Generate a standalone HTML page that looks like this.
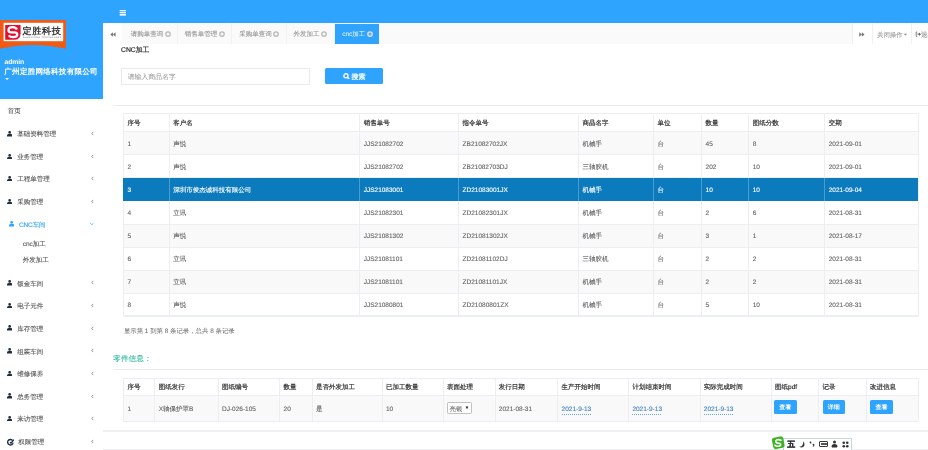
<!DOCTYPE html>
<html><head><meta charset="utf-8"><style>
*{box-sizing:border-box;margin:0;padding:0}
html,body{width:928px;height:450px;overflow:hidden;background:#fff}
body{position:relative;text-rendering:geometricPrecision;font-family:"Liberation Sans",sans-serif;color:#676a6c;font-size:6.5px;line-height:1}
.a{position:absolute;white-space:nowrap}
</style></head><body>
<div style="position:absolute;left:0;top:0;width:928px;height:450px;will-change:transform">
<div class="a" style="left:0;top:0;width:928px;height:23px;background:#2fa4ff"></div>
<svg class="a" style="left:119px;top:9px" width="8" height="8" viewBox="0 0 8 8"><rect x="0.7" y="1" width="6.2" height="1.3" fill="#fff"/><rect x="0.7" y="3" width="6.2" height="1.3" fill="#fff"/><rect x="0.7" y="5" width="6.2" height="1.6" fill="#fff"/></svg>
<div class="a" style="left:0;top:0;width:103.3px;height:99px;background:#2fa4ff"></div>
<svg class="a" style="left:0;top:20px" width="67" height="29" viewBox="0 0 67 29">
  <path d="M0 0 H66 V28.8 Q33 21 0 28.8 Z" fill="#f05a14"/>
  <rect x="3.6" y="2.8" width="59.6" height="18.4" fill="#fff"/>
  <path d="M5.2 4.9 H20 Q20.6 4.9 20.6 5.5 V13.2 Q20.6 19.8 14 19.8 H5.2 Z" fill="#e2102e"/>
  <path d="M17 9.6 Q15.8 7.1 12.6 7.1 Q8.6 7.1 8.5 10.2 Q8.5 12.3 11.2 12.3 H14.4 Q17.3 12.4 17.3 14.7 Q17.1 17.2 12.8 17.2 Q10.1 17.2 8.7 15.4" fill="none" stroke="#fff" stroke-width="2.3"/>
</svg>
<div class="a" style="left:22.4px;top:27.2px;font-size:9.2px;font-weight:bold;color:#333;letter-spacing:0.6px">定胜科技</div>
<div class="a" style="left:23px;top:36.9px;font-size:2.1px;color:#555;letter-spacing:0.55px">DINGSHENG TECHNOLOGY</div>
<div class="a" style="left:4.50px;top:60.10px;color:#fff;font-size:6.8px;font-weight:bold;letter-spacing:-0.1px">admin</div>
<div class="a" style="left:4.30px;top:67.80px;color:#fff;font-weight:bold;font-size:7.6px;letter-spacing:0.2px">广州定胜网络科技有限公司</div>
<div class="a" style="left:5px;top:78px;width:0;height:0;border-left:2px solid transparent;border-right:2px solid transparent;border-top:2px solid #fff"></div>
<div class="a" style="left:7.80px;top:109.10px;color:#555;-webkit-text-stroke:0.12px #555">首页</div>
<svg class="a" style="left:7.1px;top:131.00px" width="5.3" height="5.5" viewBox="0 0 10.6 11"><rect x="2.7" y="0" width="5.2" height="5.6" rx="2.3" fill="#1f2d3f"/><path d="M0 11 V8.8 Q0 5.8 3 5.8 H7.6 Q10.6 5.8 10.6 8.8 V11 Z" fill="#1f2d3f"/></svg>
<div class="a" style="left:17.30px;top:132.40px;color:#585858;-webkit-text-stroke:0.12px #585858">基础资料管理</div>
<svg class="a" style="left:89.2px;top:130.30px" width="6" height="7" viewBox="0 0 6 7"><path d="M4.2 1.9 L2.8 3.5 L4.2 5.1" fill="none" stroke="#777" stroke-width="0.8"/></svg>
<svg class="a" style="left:7.1px;top:153.50px" width="5.3" height="5.5" viewBox="0 0 10.6 11"><rect x="2.7" y="0" width="5.2" height="5.6" rx="2.3" fill="#1f2d3f"/><path d="M0 11 V8.8 Q0 5.8 3 5.8 H7.6 Q10.6 5.8 10.6 8.8 V11 Z" fill="#1f2d3f"/></svg>
<div class="a" style="left:17.30px;top:154.90px;color:#585858;-webkit-text-stroke:0.12px #585858">业务管理</div>
<svg class="a" style="left:89.2px;top:152.80px" width="6" height="7" viewBox="0 0 6 7"><path d="M4.2 1.9 L2.8 3.5 L4.2 5.1" fill="none" stroke="#777" stroke-width="0.8"/></svg>
<svg class="a" style="left:7.1px;top:175.90px" width="5.3" height="5.5" viewBox="0 0 10.6 11"><rect x="2.7" y="0" width="5.2" height="5.6" rx="2.3" fill="#1f2d3f"/><path d="M0 11 V8.8 Q0 5.8 3 5.8 H7.6 Q10.6 5.8 10.6 8.8 V11 Z" fill="#1f2d3f"/></svg>
<div class="a" style="left:17.30px;top:177.30px;color:#585858;-webkit-text-stroke:0.12px #585858">工程单管理</div>
<svg class="a" style="left:89.2px;top:175.20px" width="6" height="7" viewBox="0 0 6 7"><path d="M4.2 1.9 L2.8 3.5 L4.2 5.1" fill="none" stroke="#777" stroke-width="0.8"/></svg>
<svg class="a" style="left:7.1px;top:198.50px" width="5.3" height="5.5" viewBox="0 0 10.6 11"><rect x="2.7" y="0" width="5.2" height="5.6" rx="2.3" fill="#1f2d3f"/><path d="M0 11 V8.8 Q0 5.8 3 5.8 H7.6 Q10.6 5.8 10.6 8.8 V11 Z" fill="#1f2d3f"/></svg>
<div class="a" style="left:17.30px;top:199.90px;color:#585858;-webkit-text-stroke:0.12px #585858">采购管理</div>
<svg class="a" style="left:89.2px;top:197.80px" width="6" height="7" viewBox="0 0 6 7"><path d="M4.2 1.9 L2.8 3.5 L4.2 5.1" fill="none" stroke="#777" stroke-width="0.8"/></svg>
<svg class="a" style="left:9.1px;top:221.30px" width="5.3" height="5.5" viewBox="0 0 10.6 11"><rect x="2.7" y="0" width="5.2" height="5.6" rx="2.3" fill="#2fa4ff"/><path d="M0 11 V8.8 Q0 5.8 3 5.8 H7.6 Q10.6 5.8 10.6 8.8 V11 Z" fill="#2fa4ff"/></svg>
<div class="a" style="left:19.00px;top:222.70px;color:#2fa4ff;-webkit-text-stroke:0.12px #2fa4ff;letter-spacing:-0.15px">CNC车间</div>
<svg class="a" style="left:88.1px;top:221.10px" width="7" height="6" viewBox="0 0 7 6"><path d="M2.3 2.3 L3.8 3.7 L5.3 2.3" fill="none" stroke="#2fa4ff" stroke-width="0.75"/></svg>
<svg class="a" style="left:7.1px;top:280.10px" width="5.3" height="5.5" viewBox="0 0 10.6 11"><rect x="2.7" y="0" width="5.2" height="5.6" rx="2.3" fill="#1f2d3f"/><path d="M0 11 V8.8 Q0 5.8 3 5.8 H7.6 Q10.6 5.8 10.6 8.8 V11 Z" fill="#1f2d3f"/></svg>
<div class="a" style="left:17.30px;top:281.50px;color:#585858;-webkit-text-stroke:0.12px #585858">钣金车间</div>
<svg class="a" style="left:89.2px;top:279.40px" width="6" height="7" viewBox="0 0 6 7"><path d="M4.2 1.9 L2.8 3.5 L4.2 5.1" fill="none" stroke="#777" stroke-width="0.8"/></svg>
<svg class="a" style="left:7.1px;top:302.70px" width="5.3" height="5.5" viewBox="0 0 10.6 11"><rect x="2.7" y="0" width="5.2" height="5.6" rx="2.3" fill="#1f2d3f"/><path d="M0 11 V8.8 Q0 5.8 3 5.8 H7.6 Q10.6 5.8 10.6 8.8 V11 Z" fill="#1f2d3f"/></svg>
<div class="a" style="left:17.30px;top:304.10px;color:#585858;-webkit-text-stroke:0.12px #585858">电子元件</div>
<svg class="a" style="left:89.2px;top:302.00px" width="6" height="7" viewBox="0 0 6 7"><path d="M4.2 1.9 L2.8 3.5 L4.2 5.1" fill="none" stroke="#777" stroke-width="0.8"/></svg>
<svg class="a" style="left:7.1px;top:325.40px" width="5.3" height="5.5" viewBox="0 0 10.6 11"><rect x="2.7" y="0" width="5.2" height="5.6" rx="2.3" fill="#1f2d3f"/><path d="M0 11 V8.8 Q0 5.8 3 5.8 H7.6 Q10.6 5.8 10.6 8.8 V11 Z" fill="#1f2d3f"/></svg>
<div class="a" style="left:17.30px;top:326.80px;color:#585858;-webkit-text-stroke:0.12px #585858">库存管理</div>
<svg class="a" style="left:89.2px;top:324.70px" width="6" height="7" viewBox="0 0 6 7"><path d="M4.2 1.9 L2.8 3.5 L4.2 5.1" fill="none" stroke="#777" stroke-width="0.8"/></svg>
<svg class="a" style="left:7.1px;top:348.10px" width="5.3" height="5.5" viewBox="0 0 10.6 11"><rect x="2.7" y="0" width="5.2" height="5.6" rx="2.3" fill="#1f2d3f"/><path d="M0 11 V8.8 Q0 5.8 3 5.8 H7.6 Q10.6 5.8 10.6 8.8 V11 Z" fill="#1f2d3f"/></svg>
<div class="a" style="left:17.30px;top:349.50px;color:#585858;-webkit-text-stroke:0.12px #585858">组装车间</div>
<svg class="a" style="left:89.2px;top:347.40px" width="6" height="7" viewBox="0 0 6 7"><path d="M4.2 1.9 L2.8 3.5 L4.2 5.1" fill="none" stroke="#777" stroke-width="0.8"/></svg>
<svg class="a" style="left:7.1px;top:370.80px" width="5.3" height="5.5" viewBox="0 0 10.6 11"><rect x="2.7" y="0" width="5.2" height="5.6" rx="2.3" fill="#1f2d3f"/><path d="M0 11 V8.8 Q0 5.8 3 5.8 H7.6 Q10.6 5.8 10.6 8.8 V11 Z" fill="#1f2d3f"/></svg>
<div class="a" style="left:17.30px;top:372.20px;color:#585858;-webkit-text-stroke:0.12px #585858">维修保养</div>
<svg class="a" style="left:89.2px;top:370.10px" width="6" height="7" viewBox="0 0 6 7"><path d="M4.2 1.9 L2.8 3.5 L4.2 5.1" fill="none" stroke="#777" stroke-width="0.8"/></svg>
<svg class="a" style="left:7.1px;top:393.30px" width="5.3" height="5.5" viewBox="0 0 10.6 11"><rect x="2.7" y="0" width="5.2" height="5.6" rx="2.3" fill="#1f2d3f"/><path d="M0 11 V8.8 Q0 5.8 3 5.8 H7.6 Q10.6 5.8 10.6 8.8 V11 Z" fill="#1f2d3f"/></svg>
<div class="a" style="left:17.30px;top:394.70px;color:#585858;-webkit-text-stroke:0.12px #585858">总务管理</div>
<svg class="a" style="left:89.2px;top:392.60px" width="6" height="7" viewBox="0 0 6 7"><path d="M4.2 1.9 L2.8 3.5 L4.2 5.1" fill="none" stroke="#777" stroke-width="0.8"/></svg>
<svg class="a" style="left:7.1px;top:415.80px" width="5.3" height="5.5" viewBox="0 0 10.6 11"><rect x="2.7" y="0" width="5.2" height="5.6" rx="2.3" fill="#1f2d3f"/><path d="M0 11 V8.8 Q0 5.8 3 5.8 H7.6 Q10.6 5.8 10.6 8.8 V11 Z" fill="#1f2d3f"/></svg>
<div class="a" style="left:17.30px;top:417.20px;color:#585858;-webkit-text-stroke:0.12px #585858">来访管理</div>
<svg class="a" style="left:89.2px;top:415.10px" width="6" height="7" viewBox="0 0 6 7"><path d="M4.2 1.9 L2.8 3.5 L4.2 5.1" fill="none" stroke="#777" stroke-width="0.8"/></svg>
<svg class="a" style="left:5px;top:436.50px" width="10" height="10" viewBox="0 0 10 10"><path d="M7.6 3.6 A2.75 2.75 0 1 0 8.1 5.6" fill="none" stroke="#1f2d3f" stroke-width="1.35"/><path d="M4.9 5.2 L6 6.2 L8.9 2.6" fill="none" stroke="#1f2d3f" stroke-width="1.2"/></svg>
<div class="a" style="left:18.30px;top:440.00px;color:#585858;-webkit-text-stroke:0.12px #585858">权限管理</div>
<svg class="a" style="left:89.2px;top:437.90px" width="6" height="7" viewBox="0 0 6 7"><path d="M4.2 1.9 L2.8 3.5 L4.2 5.1" fill="none" stroke="#777" stroke-width="0.8"/></svg>
<div class="a" style="left:22.70px;top:241.80px;color:#555;-webkit-text-stroke:0.12px #555">cnc加工</div>
<div class="a" style="left:22.70px;top:257.70px;color:#555;-webkit-text-stroke:0.12px #555">外发加工</div>
<div class="a" style="left:103.3px;top:23px;width:824.7px;height:20.6px;background:#fafafa"></div>
<div class="a" style="left:103.3px;top:23px;width:18.9px;height:20.6px;background:#fff"></div>
<svg class="a" style="left:110.4px;top:31.6px" width="5.8" height="5" viewBox="0 0 12 10"><path d="M6 0.5 L0.5 5 L6 9.5 Z M11.5 0.5 L6 5 L11.5 9.5 Z" fill="#777"/></svg>
<div class="a" style="left:176.8px;top:23px;width:1px;height:20.6px;background:#f2f2f2"></div>
<div class="a" style="left:130.70px;top:32.20px;color:#999;-webkit-text-stroke:0.12px #999">请购单查询</div>
<svg class="a" style="left:162.60px;top:28.70px" width="10" height="10" viewBox="-2 -2 10 10"><circle cx="3" cy="3" r="2.2" fill="none" stroke="#bababa" stroke-width="1.35"/><circle cx="3" cy="3" r="0.6" fill="#fafafa" opacity="0.6"/></svg>
<div class="a" style="left:231.1px;top:23px;width:1px;height:20.6px;background:#f2f2f2"></div>
<div class="a" style="left:184.70px;top:32.20px;color:#999;-webkit-text-stroke:0.12px #999">销售单管理</div>
<svg class="a" style="left:216.60px;top:28.70px" width="10" height="10" viewBox="-2 -2 10 10"><circle cx="3" cy="3" r="2.2" fill="none" stroke="#bababa" stroke-width="1.35"/><circle cx="3" cy="3" r="0.6" fill="#fafafa" opacity="0.6"/></svg>
<div class="a" style="left:285.6px;top:23px;width:1px;height:20.6px;background:#f2f2f2"></div>
<div class="a" style="left:239.20px;top:32.20px;color:#999;-webkit-text-stroke:0.12px #999">采购单查询</div>
<svg class="a" style="left:271.10px;top:28.70px" width="10" height="10" viewBox="-2 -2 10 10"><circle cx="3" cy="3" r="2.2" fill="none" stroke="#bababa" stroke-width="1.35"/><circle cx="3" cy="3" r="0.6" fill="#fafafa" opacity="0.6"/></svg>
<div class="a" style="left:333.7px;top:23px;width:1px;height:20.6px;background:#f2f2f2"></div>
<div class="a" style="left:293.60px;top:32.20px;color:#999;-webkit-text-stroke:0.12px #999">外发加工</div>
<svg class="a" style="left:319.00px;top:28.70px" width="10" height="10" viewBox="-2 -2 10 10"><circle cx="3" cy="3" r="2.2" fill="none" stroke="#bababa" stroke-width="1.35"/><circle cx="3" cy="3" r="0.6" fill="#fafafa" opacity="0.6"/></svg>
<div class="a" style="left:334.5px;top:23.5px;width:44.5px;height:20.1px;background:#2fa4ff"></div>
<div class="a" style="left:342.20px;top:32.20px;color:#fff">cnc加工</div>
<svg class="a" style="left:364.60px;top:28.70px" width="10" height="10" viewBox="-2 -2 10 10"><circle cx="3" cy="3" r="2.2" fill="none" stroke="#f3dede" stroke-width="1.35"/><circle cx="3" cy="3" r="0.6" fill="#fff" opacity="0.6"/></svg>
<div class="a" style="left:852.2px;top:23px;width:76px;height:20.6px;background:#fff"></div>
<div class="a" style="left:852.2px;top:23px;width:1px;height:20.6px;background:#f0f0f0"></div>
<div class="a" style="left:871.8px;top:23px;width:1px;height:20.6px;background:#f0f0f0"></div>
<div class="a" style="left:910.9px;top:23px;width:1px;height:20.6px;background:#f0f0f0"></div>
<svg class="a" style="left:859px;top:31.9px" width="5.8" height="5" viewBox="0 0 12 10"><path d="M0.5 0.5 L6 5 L0.5 9.5 Z M6 0.5 L11.5 5 L6 9.5 Z" fill="#777"/></svg>
<div class="a" style="left:877.00px;top:32.90px;color:#9a9a9a;font-size:6.4px;-webkit-text-stroke:0.08px #9a9a9a">关闭操作</div>
<svg class="a" style="left:902px;top:31px" width="7" height="7" viewBox="0 0 7 7"><path d="M1.6 2.7 H5.2 L3.4 4.6 Z" fill="#8a8a8a"/></svg>
<svg class="a" style="left:913.5px;top:30px" width="8" height="8" viewBox="0 0 8 8"><path d="M3.2 2 H2.2 V6.4 H3.2" fill="none" stroke="#666" stroke-width="0.8"/><path d="M3.6 3.6 H5 V2.4 L7 4.2 L5 6 V4.8 H3.6 Z" fill="#666"/></svg>
<div class="a" style="left:921.00px;top:32.70px;color:#999;-webkit-text-stroke:0.12px #999">退出</div>
<div class="a" style="left:121.00px;top:47.90px;color:#2a2a2a;font-size:6.8px;-webkit-text-stroke:0.2px #2a2a2a">CNC加工</div>
<div class="a" style="left:121px;top:68.1px;width:189px;height:16.6px;border:1px solid #ebebeb;background:#fff"></div>
<div class="a" style="left:127.70px;top:75.40px;color:#8c8c8c;font-size:6.8px;letter-spacing:0.1px">请输入商品名字</div>
<div class="a" style="left:324.9px;top:67.9px;width:58.4px;height:16.6px;background:#2fa4ff;border-radius:1.5px"></div>
<svg class="a" style="left:342.5px;top:72.6px" width="7.2" height="6.8" viewBox="0 0 10.6 10"><circle cx="4.3" cy="4.2" r="3.1" fill="none" stroke="#fff" stroke-width="1.9"/><path d="M6.6 6.6 L9.4 9.2" stroke="#fff" stroke-width="2.3" stroke-linecap="round"/></svg>
<div class="a" style="left:351.60px;top:73.60px;color:#fff;font-size:7px;-webkit-text-stroke:0.25px #fff">搜索</div>
<div class="a" style="left:113.4px;top:105px;width:814.6px;height:1px;background:#e9ecee"></div>
<div class="a" style="left:123.3px;top:131.10px;width:794.40px;height:23.10px;background:#f9f9f9"></div>
<div class="a" style="left:123.3px;top:154.20px;width:794.40px;height:23.10px;background:#fff"></div>
<div class="a" style="left:123.3px;top:200.40px;width:794.40px;height:23.10px;background:#fff"></div>
<div class="a" style="left:123.3px;top:223.50px;width:794.40px;height:23.10px;background:#f9f9f9"></div>
<div class="a" style="left:123.3px;top:246.60px;width:794.40px;height:23.10px;background:#fff"></div>
<div class="a" style="left:123.3px;top:269.70px;width:794.40px;height:23.10px;background:#f9f9f9"></div>
<div class="a" style="left:123.3px;top:292.80px;width:794.40px;height:23.10px;background:#fff"></div>
<div class="a" style="left:123.3px;top:113.30px;width:794.40px;height:1px;background:#ebeff1"></div>
<div class="a" style="left:123.3px;top:131.10px;width:794.40px;height:1px;background:#ebeff1"></div>
<div class="a" style="left:123.3px;top:154.20px;width:794.40px;height:1px;background:#ebeff1"></div>
<div class="a" style="left:123.3px;top:177.30px;width:794.40px;height:1px;background:#ebeff1"></div>
<div class="a" style="left:123.3px;top:200.40px;width:794.40px;height:1px;background:#ebeff1"></div>
<div class="a" style="left:123.3px;top:223.50px;width:794.40px;height:1px;background:#ebeff1"></div>
<div class="a" style="left:123.3px;top:246.60px;width:794.40px;height:1px;background:#ebeff1"></div>
<div class="a" style="left:123.3px;top:269.70px;width:794.40px;height:1px;background:#ebeff1"></div>
<div class="a" style="left:123.3px;top:292.80px;width:794.40px;height:1px;background:#ebeff1"></div>
<div class="a" style="left:123.3px;top:315.40px;width:794.40px;height:1.6px;background:#ebeff1"></div>
<div class="a" style="left:123.3px;top:113.3px;width:1px;height:202.60px;background:#ebeff1"></div>
<div class="a" style="left:169px;top:113.3px;width:1px;height:202.60px;background:#ebeff1"></div>
<div class="a" style="left:359.4px;top:113.3px;width:1px;height:202.60px;background:#ebeff1"></div>
<div class="a" style="left:458.3px;top:113.3px;width:1px;height:202.60px;background:#ebeff1"></div>
<div class="a" style="left:578.3px;top:113.3px;width:1px;height:202.60px;background:#ebeff1"></div>
<div class="a" style="left:653.3px;top:113.3px;width:1px;height:202.60px;background:#ebeff1"></div>
<div class="a" style="left:701.3px;top:113.3px;width:1px;height:202.60px;background:#ebeff1"></div>
<div class="a" style="left:748.4px;top:113.3px;width:1px;height:202.60px;background:#ebeff1"></div>
<div class="a" style="left:824.4px;top:113.3px;width:1px;height:202.60px;background:#ebeff1"></div>
<div class="a" style="left:917.7px;top:113.3px;width:1px;height:202.60px;background:#ebeff1"></div>
<div class="a" style="left:123.3px;top:177.80px;width:794.90px;height:23.10px;background:#0c7bbe"></div>
<div class="a" style="left:169px;top:177.80px;width:1px;height:23.10px;background:rgba(255,255,255,0.25)"></div>
<div class="a" style="left:359.4px;top:177.80px;width:1px;height:23.10px;background:rgba(255,255,255,0.25)"></div>
<div class="a" style="left:458.3px;top:177.80px;width:1px;height:23.10px;background:rgba(255,255,255,0.25)"></div>
<div class="a" style="left:578.3px;top:177.80px;width:1px;height:23.10px;background:rgba(255,255,255,0.25)"></div>
<div class="a" style="left:653.3px;top:177.80px;width:1px;height:23.10px;background:rgba(255,255,255,0.25)"></div>
<div class="a" style="left:701.3px;top:177.80px;width:1px;height:23.10px;background:rgba(255,255,255,0.25)"></div>
<div class="a" style="left:748.4px;top:177.80px;width:1px;height:23.10px;background:rgba(255,255,255,0.25)"></div>
<div class="a" style="left:824.4px;top:177.80px;width:1px;height:23.10px;background:rgba(255,255,255,0.25)"></div>
<div class="a" style="left:127.60px;top:121.20px;color:#333;-webkit-text-stroke:0.2px #333">序号</div>
<div class="a" style="left:173.30px;top:121.20px;color:#333;-webkit-text-stroke:0.2px #333">客户名</div>
<div class="a" style="left:363.70px;top:121.20px;color:#333;-webkit-text-stroke:0.2px #333">销售单号</div>
<div class="a" style="left:462.60px;top:121.20px;color:#333;-webkit-text-stroke:0.2px #333">指令单号</div>
<div class="a" style="left:582.60px;top:121.20px;color:#333;-webkit-text-stroke:0.2px #333">商品名字</div>
<div class="a" style="left:657.60px;top:121.20px;color:#333;-webkit-text-stroke:0.2px #333">单位</div>
<div class="a" style="left:705.60px;top:121.20px;color:#333;-webkit-text-stroke:0.2px #333">数量</div>
<div class="a" style="left:752.70px;top:121.20px;color:#333;-webkit-text-stroke:0.2px #333">图纸分数</div>
<div class="a" style="left:828.70px;top:121.20px;color:#333;-webkit-text-stroke:0.2px #333">交期</div>
<div class="a" style="left:127.60px;top:141.75px;color:#626262;-webkit-text-stroke:0.1px #626262">1</div>
<div class="a" style="left:173.30px;top:141.75px;color:#626262;-webkit-text-stroke:0.1px #626262">声悦</div>
<div class="a" style="left:363.70px;top:141.75px;color:#626262;-webkit-text-stroke:0.1px #626262">JJS21082702</div>
<div class="a" style="left:462.60px;top:141.75px;color:#626262;-webkit-text-stroke:0.1px #626262">ZB21082702JX</div>
<div class="a" style="left:582.60px;top:141.75px;color:#626262;-webkit-text-stroke:0.1px #626262">机械手</div>
<div class="a" style="left:657.60px;top:141.75px;color:#626262;-webkit-text-stroke:0.1px #626262">台</div>
<div class="a" style="left:705.60px;top:141.75px;color:#626262;-webkit-text-stroke:0.1px #626262">45</div>
<div class="a" style="left:752.70px;top:141.75px;color:#626262;-webkit-text-stroke:0.1px #626262">8</div>
<div class="a" style="left:828.70px;top:141.75px;color:#626262;-webkit-text-stroke:0.1px #626262">2021-09-01</div>
<div class="a" style="left:127.60px;top:164.85px;color:#626262;-webkit-text-stroke:0.1px #626262">2</div>
<div class="a" style="left:173.30px;top:164.85px;color:#626262;-webkit-text-stroke:0.1px #626262">声悦</div>
<div class="a" style="left:363.70px;top:164.85px;color:#626262;-webkit-text-stroke:0.1px #626262">JJS21082702</div>
<div class="a" style="left:462.60px;top:164.85px;color:#626262;-webkit-text-stroke:0.1px #626262">ZB21082703DJ</div>
<div class="a" style="left:582.60px;top:164.85px;color:#626262;-webkit-text-stroke:0.1px #626262">三轴胶机</div>
<div class="a" style="left:657.60px;top:164.85px;color:#626262;-webkit-text-stroke:0.1px #626262">台</div>
<div class="a" style="left:705.60px;top:164.85px;color:#626262;-webkit-text-stroke:0.1px #626262">202</div>
<div class="a" style="left:752.70px;top:164.85px;color:#626262;-webkit-text-stroke:0.1px #626262">10</div>
<div class="a" style="left:828.70px;top:164.85px;color:#626262;-webkit-text-stroke:0.1px #626262">2021-09-01</div>
<div class="a" style="left:127.60px;top:187.95px;color:#fff;-webkit-text-stroke:0.12px #fff">3</div>
<div class="a" style="left:173.30px;top:187.95px;color:#fff;-webkit-text-stroke:0.12px #fff">深圳市俊杰诚科技有限公司</div>
<div class="a" style="left:363.70px;top:187.95px;color:#fff;-webkit-text-stroke:0.12px #fff">JJS21083001</div>
<div class="a" style="left:462.60px;top:187.95px;color:#fff;-webkit-text-stroke:0.12px #fff">ZD21083001JX</div>
<div class="a" style="left:582.60px;top:187.95px;color:#fff;-webkit-text-stroke:0.12px #fff">机械手</div>
<div class="a" style="left:657.60px;top:187.95px;color:#fff;-webkit-text-stroke:0.12px #fff">台</div>
<div class="a" style="left:705.60px;top:187.95px;color:#fff;-webkit-text-stroke:0.12px #fff">10</div>
<div class="a" style="left:752.70px;top:187.95px;color:#fff;-webkit-text-stroke:0.12px #fff">10</div>
<div class="a" style="left:828.70px;top:187.95px;color:#fff;-webkit-text-stroke:0.12px #fff">2021-09-04</div>
<div class="a" style="left:127.60px;top:211.05px;color:#626262;-webkit-text-stroke:0.1px #626262">4</div>
<div class="a" style="left:173.30px;top:211.05px;color:#626262;-webkit-text-stroke:0.1px #626262">立讯</div>
<div class="a" style="left:363.70px;top:211.05px;color:#626262;-webkit-text-stroke:0.1px #626262">JJS21082301</div>
<div class="a" style="left:462.60px;top:211.05px;color:#626262;-webkit-text-stroke:0.1px #626262">ZD21082301JX</div>
<div class="a" style="left:582.60px;top:211.05px;color:#626262;-webkit-text-stroke:0.1px #626262">机械手</div>
<div class="a" style="left:657.60px;top:211.05px;color:#626262;-webkit-text-stroke:0.1px #626262">台</div>
<div class="a" style="left:705.60px;top:211.05px;color:#626262;-webkit-text-stroke:0.1px #626262">2</div>
<div class="a" style="left:752.70px;top:211.05px;color:#626262;-webkit-text-stroke:0.1px #626262">6</div>
<div class="a" style="left:828.70px;top:211.05px;color:#626262;-webkit-text-stroke:0.1px #626262">2021-08-31</div>
<div class="a" style="left:127.60px;top:234.15px;color:#626262;-webkit-text-stroke:0.1px #626262">5</div>
<div class="a" style="left:173.30px;top:234.15px;color:#626262;-webkit-text-stroke:0.1px #626262">声悦</div>
<div class="a" style="left:363.70px;top:234.15px;color:#626262;-webkit-text-stroke:0.1px #626262">JJS21081302</div>
<div class="a" style="left:462.60px;top:234.15px;color:#626262;-webkit-text-stroke:0.1px #626262">ZD21081302JX</div>
<div class="a" style="left:582.60px;top:234.15px;color:#626262;-webkit-text-stroke:0.1px #626262">机械手</div>
<div class="a" style="left:657.60px;top:234.15px;color:#626262;-webkit-text-stroke:0.1px #626262">台</div>
<div class="a" style="left:705.60px;top:234.15px;color:#626262;-webkit-text-stroke:0.1px #626262">3</div>
<div class="a" style="left:752.70px;top:234.15px;color:#626262;-webkit-text-stroke:0.1px #626262">1</div>
<div class="a" style="left:828.70px;top:234.15px;color:#626262;-webkit-text-stroke:0.1px #626262">2021-08-17</div>
<div class="a" style="left:127.60px;top:257.25px;color:#626262;-webkit-text-stroke:0.1px #626262">6</div>
<div class="a" style="left:173.30px;top:257.25px;color:#626262;-webkit-text-stroke:0.1px #626262">立讯</div>
<div class="a" style="left:363.70px;top:257.25px;color:#626262;-webkit-text-stroke:0.1px #626262">JJS21081101</div>
<div class="a" style="left:462.60px;top:257.25px;color:#626262;-webkit-text-stroke:0.1px #626262">ZD21081102DJ</div>
<div class="a" style="left:582.60px;top:257.25px;color:#626262;-webkit-text-stroke:0.1px #626262">三轴胶机</div>
<div class="a" style="left:657.60px;top:257.25px;color:#626262;-webkit-text-stroke:0.1px #626262">台</div>
<div class="a" style="left:705.60px;top:257.25px;color:#626262;-webkit-text-stroke:0.1px #626262">2</div>
<div class="a" style="left:752.70px;top:257.25px;color:#626262;-webkit-text-stroke:0.1px #626262">2</div>
<div class="a" style="left:828.70px;top:257.25px;color:#626262;-webkit-text-stroke:0.1px #626262">2021-08-31</div>
<div class="a" style="left:127.60px;top:280.35px;color:#626262;-webkit-text-stroke:0.1px #626262">7</div>
<div class="a" style="left:173.30px;top:280.35px;color:#626262;-webkit-text-stroke:0.1px #626262">立讯</div>
<div class="a" style="left:363.70px;top:280.35px;color:#626262;-webkit-text-stroke:0.1px #626262">JJS21081101</div>
<div class="a" style="left:462.60px;top:280.35px;color:#626262;-webkit-text-stroke:0.1px #626262">ZD21081101JX</div>
<div class="a" style="left:582.60px;top:280.35px;color:#626262;-webkit-text-stroke:0.1px #626262">机械手</div>
<div class="a" style="left:657.60px;top:280.35px;color:#626262;-webkit-text-stroke:0.1px #626262">台</div>
<div class="a" style="left:705.60px;top:280.35px;color:#626262;-webkit-text-stroke:0.1px #626262">2</div>
<div class="a" style="left:752.70px;top:280.35px;color:#626262;-webkit-text-stroke:0.1px #626262">2</div>
<div class="a" style="left:828.70px;top:280.35px;color:#626262;-webkit-text-stroke:0.1px #626262">2021-08-31</div>
<div class="a" style="left:127.60px;top:303.45px;color:#626262;-webkit-text-stroke:0.1px #626262">8</div>
<div class="a" style="left:173.30px;top:303.45px;color:#626262;-webkit-text-stroke:0.1px #626262">声悦</div>
<div class="a" style="left:363.70px;top:303.45px;color:#626262;-webkit-text-stroke:0.1px #626262">JJS21080801</div>
<div class="a" style="left:462.60px;top:303.45px;color:#626262;-webkit-text-stroke:0.1px #626262">ZD21080801ZX</div>
<div class="a" style="left:582.60px;top:303.45px;color:#626262;-webkit-text-stroke:0.1px #626262">机械手</div>
<div class="a" style="left:657.60px;top:303.45px;color:#626262;-webkit-text-stroke:0.1px #626262">台</div>
<div class="a" style="left:705.60px;top:303.45px;color:#626262;-webkit-text-stroke:0.1px #626262">5</div>
<div class="a" style="left:752.70px;top:303.45px;color:#626262;-webkit-text-stroke:0.1px #626262">10</div>
<div class="a" style="left:828.70px;top:303.45px;color:#626262;-webkit-text-stroke:0.1px #626262">2021-08-31</div>
<div class="a" style="left:123.90px;top:328.80px;color:#666;font-size:6.4px">显示第 1 到第 8 条记录，总共 8 条记录</div>
<div class="a" style="left:113.20px;top:355.40px;color:#1ab394;font-size:7.6px;letter-spacing:0.1px;-webkit-text-stroke:0.05px #1ab394">零件信息：</div>
<div class="a" style="left:113.4px;top:369px;width:814.6px;height:1px;background:#e9ecee"></div>
<div class="a" style="left:123.3px;top:395.2px;width:794.40px;height:26.00px;background:#f9f9f9"></div>
<div class="a" style="left:123.3px;top:377.5px;width:794.40px;height:1px;background:#ebeff1"></div>
<div class="a" style="left:123.3px;top:395.2px;width:794.40px;height:1px;background:#ebeff1"></div>
<div class="a" style="left:123.3px;top:420.7px;width:794.40px;height:1.6px;background:#ebeff1"></div>
<div class="a" style="left:123.3px;top:377.5px;width:1px;height:43.70px;background:#ebeff1"></div>
<div class="a" style="left:154.4px;top:377.5px;width:1px;height:43.70px;background:#ebeff1"></div>
<div class="a" style="left:217.7px;top:377.5px;width:1px;height:43.70px;background:#ebeff1"></div>
<div class="a" style="left:279.3px;top:377.5px;width:1px;height:43.70px;background:#ebeff1"></div>
<div class="a" style="left:311.6px;top:377.5px;width:1px;height:43.70px;background:#ebeff1"></div>
<div class="a" style="left:381.6px;top:377.5px;width:1px;height:43.70px;background:#ebeff1"></div>
<div class="a" style="left:442.8px;top:377.5px;width:1px;height:43.70px;background:#ebeff1"></div>
<div class="a" style="left:494.5px;top:377.5px;width:1px;height:43.70px;background:#ebeff1"></div>
<div class="a" style="left:557.3px;top:377.5px;width:1px;height:43.70px;background:#ebeff1"></div>
<div class="a" style="left:628.1px;top:377.5px;width:1px;height:43.70px;background:#ebeff1"></div>
<div class="a" style="left:699.5px;top:377.5px;width:1px;height:43.70px;background:#ebeff1"></div>
<div class="a" style="left:770.8px;top:377.5px;width:1px;height:43.70px;background:#ebeff1"></div>
<div class="a" style="left:818.2px;top:377.5px;width:1px;height:43.70px;background:#ebeff1"></div>
<div class="a" style="left:865.6px;top:377.5px;width:1px;height:43.70px;background:#ebeff1"></div>
<div class="a" style="left:917.7px;top:377.5px;width:1px;height:43.70px;background:#ebeff1"></div>
<div class="a" style="left:127.60px;top:385.10px;color:#333;-webkit-text-stroke:0.2px #333">序号</div>
<div class="a" style="left:158.70px;top:385.10px;color:#333;-webkit-text-stroke:0.2px #333">图纸发行</div>
<div class="a" style="left:222.00px;top:385.10px;color:#333;-webkit-text-stroke:0.2px #333">图纸编号</div>
<div class="a" style="left:283.60px;top:385.10px;color:#333;-webkit-text-stroke:0.2px #333">数量</div>
<div class="a" style="left:315.90px;top:385.10px;color:#333;-webkit-text-stroke:0.2px #333">是否外发加工</div>
<div class="a" style="left:385.90px;top:385.10px;color:#333;-webkit-text-stroke:0.2px #333">已加工数量</div>
<div class="a" style="left:447.10px;top:385.10px;color:#333;-webkit-text-stroke:0.2px #333">表面处理</div>
<div class="a" style="left:498.80px;top:385.10px;color:#333;-webkit-text-stroke:0.2px #333">发行日期</div>
<div class="a" style="left:561.60px;top:385.10px;color:#333;-webkit-text-stroke:0.2px #333">生产开始时间</div>
<div class="a" style="left:632.40px;top:385.10px;color:#333;-webkit-text-stroke:0.2px #333">计划结束时间</div>
<div class="a" style="left:703.80px;top:385.10px;color:#333;-webkit-text-stroke:0.2px #333">实际完成时间</div>
<div class="a" style="left:775.10px;top:385.10px;color:#333;-webkit-text-stroke:0.2px #333">图纸pdf</div>
<div class="a" style="left:822.50px;top:385.10px;color:#333;-webkit-text-stroke:0.2px #333">记录</div>
<div class="a" style="left:869.90px;top:385.10px;color:#333;-webkit-text-stroke:0.2px #333">改进信息</div>
<div class="a" style="left:127.60px;top:407.00px;color:#626262;-webkit-text-stroke:0.1px #626262">1</div>
<div class="a" style="left:158.70px;top:407.00px;color:#626262;-webkit-text-stroke:0.1px #626262">X轴保护罩B</div>
<div class="a" style="left:222.00px;top:407.00px;color:#626262;-webkit-text-stroke:0.1px #626262">DJ-026-105</div>
<div class="a" style="left:283.60px;top:407.00px;color:#626262;-webkit-text-stroke:0.1px #626262">20</div>
<div class="a" style="left:315.90px;top:407.00px;color:#626262;-webkit-text-stroke:0.1px #626262">是</div>
<div class="a" style="left:385.90px;top:407.00px;color:#626262;-webkit-text-stroke:0.1px #626262">10</div>
<div class="a" style="left:446.7px;top:402.3px;width:25px;height:11.8px;border:0.8px solid #c2c2c2;border-radius:1.2px;background:#fff"></div>
<div class="a" style="left:449.60px;top:406.50px;color:#555;font-size:6.4px;-webkit-text-stroke:0.05px #555">亮银</div>
<svg class="a" style="left:463px;top:404px" width="8" height="8" viewBox="0 0 8 8"><path d="M2.6 2.4 H5.4 L4 5.2 Z" fill="#222"/></svg>
<div class="a" style="left:498.80px;top:407.00px;color:#626262;-webkit-text-stroke:0.1px #626262">2021-08-31</div>
<div class="a" style="left:561.60px;top:407.00px;color:#3d7fc0;-webkit-text-stroke:0.1px #3d7fc0">2021-9-13</div>
<div class="a" style="left:561.60px;top:413.50px;width:29.5px;height:1px;background:repeating-linear-gradient(90deg,#6aa6dc 0 1px,transparent 1px 2px)"></div>
<div class="a" style="left:632.40px;top:407.00px;color:#3d7fc0;-webkit-text-stroke:0.1px #3d7fc0">2021-9-13</div>
<div class="a" style="left:632.40px;top:413.50px;width:29.5px;height:1px;background:repeating-linear-gradient(90deg,#6aa6dc 0 1px,transparent 1px 2px)"></div>
<div class="a" style="left:703.80px;top:407.00px;color:#3d7fc0;-webkit-text-stroke:0.1px #3d7fc0">2021-9-13</div>
<div class="a" style="left:703.80px;top:413.50px;width:29.5px;height:1px;background:repeating-linear-gradient(90deg,#6aa6dc 0 1px,transparent 1px 2px)"></div>
<div class="a" style="left:774.0px;top:399.7px;width:22.6px;height:14.8px;background:#2fa4ff;border-radius:1.5px"></div>
<div class="a" style="left:779.30px;top:405.10px;color:#fff;font-weight:bold;font-size:6px">查看</div>
<div class="a" style="left:822.5px;top:399.7px;width:22.6px;height:14.8px;background:#2fa4ff;border-radius:1.5px"></div>
<div class="a" style="left:827.80px;top:405.10px;color:#fff;font-weight:bold;font-size:6px">详细</div>
<div class="a" style="left:870.1px;top:399.7px;width:22.6px;height:14.8px;background:#2fa4ff;border-radius:1.5px"></div>
<div class="a" style="left:875.40px;top:405.10px;color:#fff;font-weight:bold;font-size:6px">查看</div>
<div class="a" style="left:103.3px;top:430.3px;width:824.7px;height:1.3px;background:#eef0f2"></div>
<div class="a" style="left:103.3px;top:448.8px;width:824.7px;height:1.2px;background:#eef0f2"></div>
<div class="a" style="left:782.6px;top:438.2px;width:69px;height:13px;background:#fff;border:1px solid #c9d5e2"></div>
<svg class="a" style="left:770.5px;top:436.2px" width="14.5" height="14" viewBox="0 0 29 28"><rect x="3" y="2" width="23" height="23" rx="5" transform="rotate(-12 14.5 13.5)" fill="#3cb521"/><path d="M20 8.5 Q17 6.5 13 7.5 Q8.5 9 10 12.5 Q11.5 14.5 16 14.5 Q20 15 19 18.5 Q17.5 21 12 20.5 Q9 20 8 18.5" fill="none" stroke="#fff" stroke-width="3.2" stroke-linecap="round"/></svg>
<div class="a" style="left:787.20px;top:441.40px;color:#333;font-size:8px;font-weight:bold;-webkit-text-stroke:0.35px #333">五</div>
<svg class="a" style="left:799px;top:440.8px" width="6.5" height="7" viewBox="0 0 13 14"><path d="M8 0.5 Q13.5 6 9 11.5 Q5 14.5 0.5 11.5 Q6 11.5 7.5 7.5 Q8.7 4 8 0.5 Z" fill="#333"/></svg>
<svg class="a" style="left:809px;top:440.8px" width="6" height="7" viewBox="0 0 12 14"><circle cx="3" cy="3" r="1.8" fill="#333"/><path d="M9 5.5 Q11 5.5 10.8 8.3 Q10.4 11 7.6 12.2 L7 11.4 Q8.8 10.4 8.9 9 Q7.2 8.8 7.2 7.3 Q7.3 5.5 9 5.5 Z" fill="#333"/></svg>
<div class="a" style="left:819.2px;top:441.2px;width:9.2px;height:6.2px;border:1.4px solid #3a3a3a;border-radius:1px;background:#fff"></div>
<div class="a" style="left:820.8px;top:443.1px;width:6px;height:2.4px;background:repeating-linear-gradient(0deg,#555 0 0.8px,#fff 0.8px 1.2px)"></div>
<svg class="a" style="left:831px;top:440px" width="7" height="8" viewBox="0 0 14 16"><circle cx="7" cy="4" r="3" fill="#333"/><path d="M1 14 Q1 8 7 8 Q13 8 13 14 Z" fill="#333"/><rect x="2" y="13" width="10" height="2" fill="#333"/></svg>
<svg class="a" style="left:842px;top:440.5px" width="7" height="7" viewBox="0 0 14 14"><circle cx="3.5" cy="3.5" r="2.6" fill="#333"/><circle cx="10.5" cy="3.5" r="2.6" fill="#333"/><circle cx="3.5" cy="10.5" r="2.6" fill="#333"/><circle cx="10.5" cy="10.5" r="2.6" fill="#333"/></svg>
</div>
</body></html>
